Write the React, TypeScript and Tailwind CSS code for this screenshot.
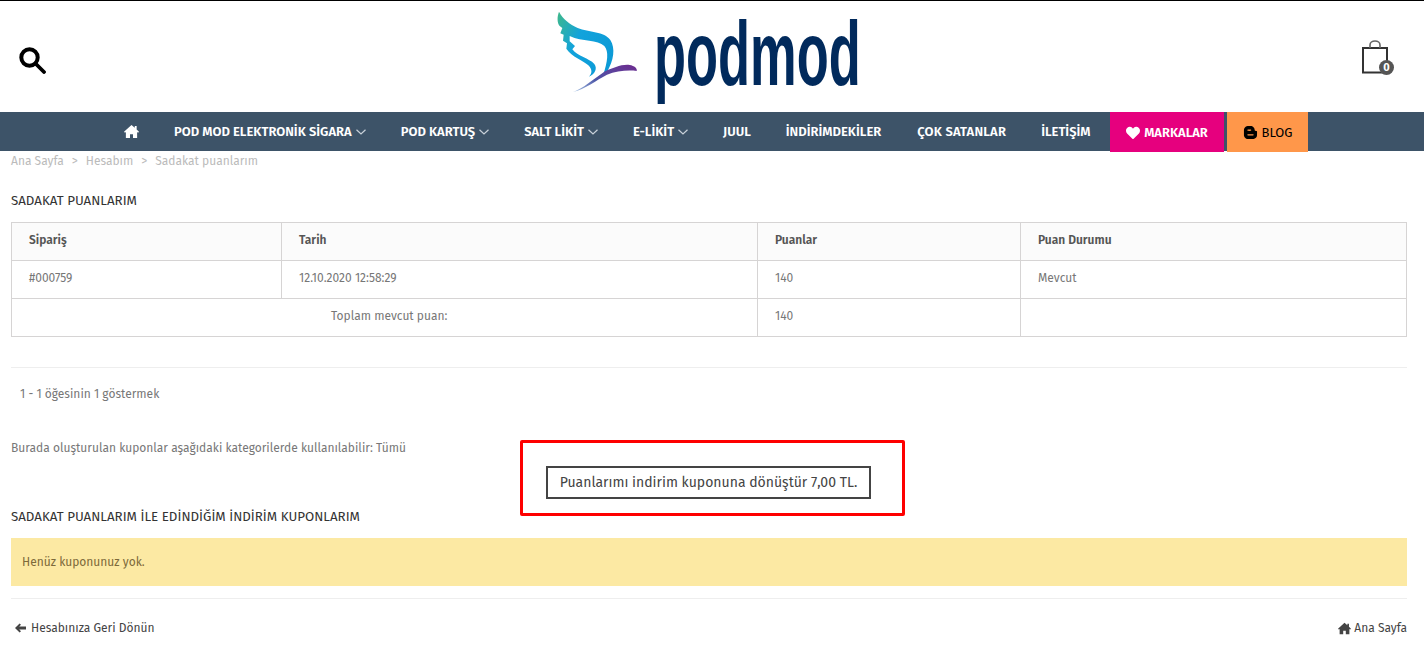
import React from "react";
import { FaBloggerB, FaHeart } from "react-icons/fa";

const navItems = [
  { label: "POD MOD ELEKTRONİK SİGARA", arrow: true },
  { label: "POD KARTUŞ", arrow: true },
  { label: "SALT LİKİT", arrow: true },
  { label: "E-LİKİT", arrow: true },
  { label: "JUUL" },
  { label: "İNDİRİMDEKİLER" },
  { label: "ÇOK SATANLAR", wide: true },
  { label: "İLETİŞİM" },
];

const HomeIcon = ({ size }: { size: number }) => (
  <svg width={size} height={size} viewBox="0 0 16 16" fill="currentColor">
    <path d="M8 1 L11.5 4 V2 H13.5 V5.8 L16 8.3 L15 9.3 L14 8.5 V15 H9.6 V10.8 H6.4 V15 H2 V8.5 L1 9.3 L0 8.3 Z" />
  </svg>
);

const BackArrow = () => (
  <svg width="11" height="10" viewBox="0 0 11 10" fill="currentColor">
    <path d="M0 5 L4.6 0.4 L6 1.8 L4.2 3.5 H11 V6.5 H4.2 L6 8.2 L4.6 9.6 Z" />
  </svg>
);

const Chevron = () => (
  <svg width="10" height="6" viewBox="0 0 10 6" fill="none" stroke="#c9d1d9" strokeWidth="1.2">
    <path d="M0.5 0.7 L5 5 L9.5 0.7" />
  </svg>
);

const SearchIcon = () => (
  <svg width="27" height="27" viewBox="0 0 27 27" fill="none" stroke="#000" className="mt-[8px]">
    <circle cx="10.5" cy="10.5" r="8.2" strokeWidth="4" />
    <path d="M16.5 16.5 L25 25" strokeWidth="3.8" strokeLinecap="round" />
  </svg>
);

const Logo = () => (
  <svg width="340" height="112" viewBox="0 0 1020 336" className="block">
    <defs>
      <linearGradient id="wing" x1="0" y1="0" x2="1" y2="0.6">
        <stop offset="0" stopColor="#3fb88a" />
        <stop offset="0.45" stopColor="#12a3dc" />
        <stop offset="1" stopColor="#0c9ad6" />
      </linearGradient>
      <linearGradient id="tail" x1="0" y1="1" x2="1" y2="0">
        <stop offset="0" stopColor="#a9c6e6" />
        <stop offset="0.4" stopColor="#4d57a8" />
        <stop offset="1" stopColor="#6e2a8e" />
      </linearGradient>
    </defs>
    <path
      fill="url(#wing)"
      d="M60 35 C54 50 54 68 62 78 L70 84 L64 100 L74 104 L72 122 L84 130 L82 146 C100 172 130 180 148 196 C160 208 160 220 150 230 C168 222 176 206 166 192 C150 174 116 170 100 148 L108 138 L92 124 L92 108 C130 126 176 118 196 138 C210 154 206 186 192 226 L204 216 C224 180 230 146 214 120 C196 94 150 98 116 84 C92 72 72 58 60 35 Z"
    />
    <path
      fill="url(#tail)"
      d="M102 276 C130 268 165 236 198 214 C222 204 248 192 272 195 C286 197 296 206 293 213 C270 210 232 212 204 224 C172 240 138 268 102 276 Z"
    />
    <text
      x="345"
      y="254"
      textLength="620"
      lengthAdjust="spacingAndGlyphs"
      fontFamily="'Liberation Sans', sans-serif"
      fontWeight="700"
      fontSize="272"
      fill="#012a5c"
    >
      podmod
    </text>
  </svg>
);

const BagIcon = () => (
  <div className="relative w-[32px] h-[36px]">
    <svg width="32" height="36" viewBox="0 0 32 36" fill="none">
      <rect x="1" y="8" width="24" height="24.5" stroke="#333" strokeWidth="2" />
      <path d="M8 8 V5 a5 4 0 0 1 10 0 V8" stroke="#666" strokeWidth="1.6" />
    </svg>
    <span className="absolute right-0 bottom-[1px] w-[15px] h-[15px] rounded-full bg-[#555] text-white text-[11px] font-bold leading-[15px] text-center">
      0
    </span>
  </div>
);

const App = () => {
  return (
    <div className="w-[1424px] h-[659px] overflow-hidden bg-white font-['Fira_Sans','Noto_Sans',sans-serif] text-[12px] text-[#777]">
      <header className="h-[112px] border-t border-black flex items-center justify-between pl-[19px] pr-[30px]">
        <SearchIcon />
        <div className="ml-[9px] mt-[-1px]">
          <Logo />
        </div>
        <div className="mt-[2px]">
          <BagIcon />
        </div>
      </header>

      <nav className="h-[39px] bg-[#3d5368] flex items-start pl-[124px] text-white font-semibold text-[13px]">
        <div className="h-[39px] flex items-center mr-[35px]">
          <HomeIcon size={15} />
        </div>
        <div className="flex gap-[35px] w-[936px]">
          {navItems.map((item) => (
            <div
              key={item.label}
              className={
                item.wide
                  ? "h-[40px] ml-[1px] flex items-center whitespace-nowrap tracking-[0.2px]"
                  : "h-[40px] flex items-center gap-[4px] whitespace-nowrap"
              }
            >
              {item.label}
              {item.arrow && <Chevron />}
            </div>
          ))}
        </div>
        <div className="w-[114px] h-[40px] pt-[1px] bg-[#e6007e] flex items-center justify-center gap-[4px]">
          <FaHeart className="text-[14px]" />
          MARKALAR
        </div>
        <div className="w-[81px] h-[40px] pt-[1px] ml-[3px] bg-[#ff974a] text-black font-normal flex items-center justify-center gap-[4px]">
          <FaBloggerB className="text-[15px]" />
          BLOG
        </div>
      </nav>

      <main className="px-[11px]">
        <div className="h-[20px] pt-[1px] flex gap-[8px] text-[#bbb] leading-[18px]">
          <span>Ana Sayfa</span>
          <span>&gt;</span>
          <span>Hesabım</span>
          <span>&gt;</span>
          <span>Sadakat puanlarım</span>
        </div>

        <h1 className="mt-[21px] text-[#333] text-[13.33px] leading-[18px] font-normal">SADAKAT PUANLARIM</h1>

        <table className="mt-[12px] w-[1395px] table-fixed border-collapse border border-[#d6d4d4]">
          <colgroup>
            <col className="w-[270px]" />
            <col className="w-[476px]" />
            <col className="w-[263px]" />
            <col className="w-[386px]" />
          </colgroup>
          <thead>
            <tr className="h-[38px] bg-[#fbfbfb] text-[#555]">
              {["Sipariş", "Tarih", "Puanlar", "Puan Durumu"].map((title) => (
                <th key={title} className="border border-[#d6d4d4] pl-[17px] pb-[4px] text-left font-semibold">
                  {title}
                </th>
              ))}
            </tr>
          </thead>
          <tbody>
            <tr className="h-[38px]">
              {["#000759", "12.10.2020 12:58:29", "140", "Mevcut"].map((cell) => (
                <td key={cell} className="border border-[#d6d4d4] pl-[17px] pb-[4px]">
                  {cell}
                </td>
              ))}
            </tr>
            <tr className="h-[38px]">
              <td colSpan={2} className="border border-[#d6d4d4] pl-[319px] pb-[4px]">
                Toplam mevcut puan:
              </td>
              <td className="border border-[#d6d4d4] pl-[17px] pb-[4px]">140</td>
              <td className="border border-[#d6d4d4]"></td>
            </tr>
          </tbody>
        </table>

        <div className="mt-[30px] w-[1396px] border-t border-[#eee] pt-[17px] pl-[9px] leading-[18px]">1 - 1 öğesinin 1 göstermek</div>

        <p className="mt-[36px] leading-[18px]">Burada oluşturulan kuponlar aşağıdaki kategorilerde kullanılabilir: Tümü</p>

        <div className="relative h-[33px] mt-[9px]">
          <button className="absolute left-[535px] top-0 w-[325px] h-[33px] border-2 border-[#444] text-[14px] text-[#444]">
            Puanlarımı indirim kuponuna dönüştür 7,00 TL.
          </button>
          <div className="absolute left-[509px] top-[-26px] w-[385px] h-[76px] border-[3px] border-[#fe0000] rounded-[2px]"></div>
        </div>

        <h2 className="mt-[9px] text-[#333] text-[13.33px] leading-[18px] font-normal">SADAKAT PUANLARIM İLE EDİNDİĞİM İNDİRİM KUPONLARIM</h2>

        <div className="mt-[12px] h-[48px] w-[1396px] bg-[#fce9a3] pl-[11px] flex items-center text-[#7d6a3a]">Henüz kuponunuz yok.</div>

        <div className="mt-[12px] w-[1396px] border-t border-[#eee] pt-[20px] flex justify-between text-[#444] leading-[18px]">
          <span className="flex items-center gap-[5px] pl-[4px]">
            <BackArrow />
            Hesabınıza Geri Dönün
          </span>
          <span className="flex items-center gap-[3px]">
            <HomeIcon size={13} />
            Ana Sayfa
          </span>
        </div>
      </main>
    </div>
  );
};

export default App;
